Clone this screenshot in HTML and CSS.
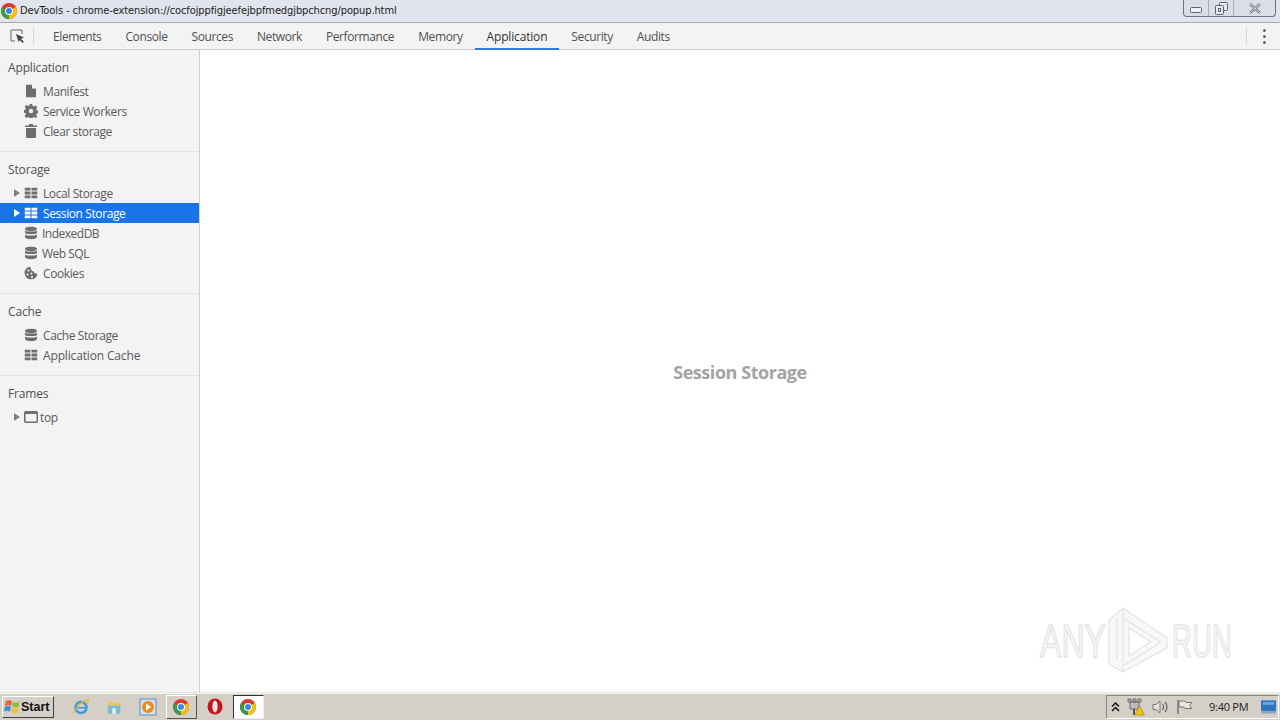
FILE: index.html
```html
<!DOCTYPE html>
<html lang="en">
<head>
<title>DevTools</title>
<link rel="stylesheet" href="styles.css">
</head>
<body>

<svg class="defs" width="0" height="0">
  <symbol id="chrome" viewBox="0 0 16 16">
    <circle cx="8" cy="8" r="8" fill="#d8392b"/>
    <path d="M8 8 L1.100 4 A8 8 0 0 0 8 16 Z" fill="#3a9a47"/>
    <path d="M8 8 L8 16 A8 8 0 0 0 14.900 4 Z" fill="#f4c20d"/>
    <circle cx="8" cy="8" r="4" fill="#fff"/>
    <circle cx="8" cy="8" r="3" fill="#4285e0"/>
  </symbol>
  <symbol id="grid" viewBox="0 0 13 11">
    <path d="M0 0h6v3H0zM7 0h6v3H7zM0 4h6v3H0zM7 4h6v3H7zM0 8h6v3H0zM7 8h6v3H7z"/>
  </symbol>
  <symbol id="db" viewBox="0 0 13 13">
    <ellipse cx="6.500" cy="2.400" rx="6" ry="2.400"/>
    <path d="M.5 3.900C1.500 5.500 11.500 5.500 12.500 3.900V6.400C11.500 8 1.500 8 .5 6.400zM.5 7.900C1.500 9.500 11.500 9.500 12.500 7.900V10.500C11.500 13.500 1.500 13.500 .5 10.500z"/>
  </symbol>
</svg>

<div class="titlebar">
  <svg class="title-icon" width="16" height="16"><use href="#chrome"/></svg>
  <span class="title-text">DevTools - chrome-extension://cocfojppfigjeefejbpfmedgjbpchcng/popup.html</span>
  <div class="win-btns">
    <div class="win-btn min"><svg width="12" height="6" viewBox="0 0 12 6"><rect x=".5" y=".5" width="11" height="5" rx="1" fill="#eef0f4" stroke="#5c6470"/></svg></div>
    <div class="win-btn max"><svg width="13" height="13" viewBox="0 0 13 13" fill="#e6e9ef" stroke="#5c6470"><rect x="4.500" y=".5" width="8" height="8" rx="1"/><rect x=".5" y="3.500" width="8" height="9" rx="1"/><rect x="3.500" y="6.500" width="2" height="3"/></svg></div>
    <div class="win-btn close"><svg width="12" height="11" viewBox="0 0 12 11"><path d="M1 1 L11 10 M11 1 L1 10" stroke="#6b7380" stroke-width="2.500" fill="none"/><path d="M1 1 L11 10 M11 1 L1 10" stroke="#eef0f4" stroke-width="1" fill="none"/></svg></div>
  </div>
</div>

<div class="toolbar">
  <div class="inspect">
    <svg width="15" height="15" viewBox="0 0 15 15"><path d="M5 12H1V1h11v4" fill="none" stroke="#666" stroke-width="1"/><path d="M6 5l8 3.500-3 1.200 2.800 3-1.400 1.300-2.700-3L8.500 13z" fill="#444"/></svg>
  </div>
  <div class="tabs">
    <div class="tab">Elements</div>
    <div class="tab">Console</div>
    <div class="tab">Sources</div>
    <div class="tab">Network</div>
    <div class="tab">Performance</div>
    <div class="tab">Memory</div>
    <div class="tab active">Application</div>
    <div class="tab">Security</div>
    <div class="tab">Audits</div>
  </div>
  <div class="more"><span></span><span></span><span></span></div>
</div>

<div class="main">
  <div class="sidebar">
    <div class="section">
      <div class="section-title">Application</div>
      <div class="item">
        <svg class="icon" width="12" height="13" viewBox="0 0 12 13"><path d="M1 0H7l4 4V13H1zM7 0v4h4" fill="#6e6e6e"/></svg>
        <span>Manifest</span>
      </div>
      <div class="item">
        <svg class="icon" width="14" height="14" viewBox="0 0 14 14"><path d="M5.800 0h2.400l.4 2 1.300.6 1.800-1.100 1.600 1.700-1.100 1.700.5 1.300 2 .4v2.400l-2 .4-.5 1.300 1.100 1.700-1.600 1.700-1.800-1.100-1.300.5-.4 2H5.800l-.4-2-1.300-.5-1.800 1.100L.7 11.900l1.100-1.700-.5-1.300-2-.4V6.100l2-.4.500-1.300L.7 2.700l1.600-1.700 1.800 1.100 1.300-.6zM7 4.800a2.200 2.200 0 1 0 0 4.400 2.200 2.200 0 0 0 0-4.400z" fill="#6e6e6e" fill-rule="evenodd"/></svg>
        <span>Service Workers</span>
      </div>
      <div class="item">
        <svg class="icon" width="12" height="14" viewBox="0 0 12 14"><path d="M0 1.500h4V0h4v1.500h4V3H0zM1 4h10v9a1 1 0 0 1-1 1H2a1 1 0 0 1-1-1z" fill="#6e6e6e"/></svg>
        <span>Clear storage</span>
      </div>
    </div>

    <div class="section">
      <div class="section-title">Storage</div>
      <div class="item">
        <i class="arrow"></i>
        <svg class="icon grid" width="13" height="11"><use href="#grid"/></svg>
        <span>Local Storage</span>
      </div>
      <div class="item selected">
        <i class="arrow"></i>
        <svg class="icon grid" width="13" height="11"><use href="#grid"/></svg>
        <span>Session Storage</span>
      </div>
      <div class="item">
        <svg class="icon db" width="13" height="13"><use href="#db"/></svg>
        <span class="tight">IndexedDB</span>
      </div>
      <div class="item">
        <svg class="icon db" width="13" height="13"><use href="#db"/></svg>
        <span class="tight">Web SQL</span>
      </div>
      <div class="item">
        <svg class="icon" width="14" height="13" viewBox="0 0 14 13"><path d="M6.500 0a6.500 6.500 0 1 0 7 7.200C11.500 7.500 10 6.500 10 5 8 5 6.300 3 6.500 0z" fill="#6e6e6e"/><g fill="#f3f3f3"><circle cx="4.500" cy="4" r="1.100"/><circle cx="3.500" cy="8" r="1.100"/><circle cx="7.500" cy="7" r=".9"/><circle cx="8" cy="10.500" r="1.100"/></g></svg>
        <span>Cookies</span>
      </div>
    </div>

    <div class="section">
      <div class="section-title">Cache</div>
      <div class="item">
        <svg class="icon db" width="13" height="13"><use href="#db"/></svg>
        <span>Cache Storage</span>
      </div>
      <div class="item">
        <svg class="icon grid" width="13" height="11"><use href="#grid"/></svg>
        <span class="wide">Application Cache</span>
      </div>
    </div>

    <div class="section last">
      <div class="section-title">Frames</div>
      <div class="item">
        <i class="arrow"></i>
        <svg class="icon frame" width="14" height="12" viewBox="0 0 14 12"><rect x=".75" y=".75" width="12.500" height="10.500" rx="1" fill="#f3f3f3" stroke="#6e6e6e" stroke-width="1.500"/><rect x="1" y="1" width="12" height="2" fill="#6e6e6e"/></svg>
        <span class="frame-label">top</span>
      </div>
    </div>
  </div>

  <div class="content">
    <div class="placeholder">Session Storage</div>
  </div>
</div>

<div class="taskbar">
  <div class="start">
    <svg width="17" height="16" viewBox="0 0 18 16"><path d="M2 2C5 0 7 1 8.500 2L7.500 7C6 6 4 5.500 1 7z" fill="#e8642c"/><path d="M9.500 2.500C12 4 14 4 16.500 2.500L15.500 7.500C13 9 11 8.500 8.700 7.500z" fill="#8dbb3c"/><path d="M1 8C3.500 6.500 5.500 7 7.300 8L6.400 13C4.500 12 2.500 11.500 0 13z" fill="#3f8fd8"/><path d="M8.400 8.500C11 9.500 13 10 15.300 8.500L14.500 13.500C12 15 10 14.500 7.500 13.500z" fill="#f2c230"/></svg>
    <span>Start</span>
  </div>
  <div class="quick">
    <div class="task"><svg width="18" height="18" viewBox="0 0 18 18"><circle cx="9" cy="9.500" r="5.500" fill="none" stroke="#3c9ad8" stroke-width="2.500"/><path d="M5 9h9v1.500H5z" fill="#3c9ad8"/><path d="M1.500 15C3 11 9 3 16 2c1 1-.5 3-1.500 4" fill="none" stroke="#e0b83c" stroke-width="1.300"/></svg></div>
    <div class="task"><svg width="16" height="16" viewBox="0 0 18 17"><path d="M2 2h5l1 2h8v11a1 1 0 0 1-1 1H3a1 1 0 0 1-1-1z" fill="#e6c765"/><path d="M2 7h14v9H2z" fill="#7fb9d6"/><path d="M7 10h4v6H7z" fill="#e6f1f5"/></svg></div>
    <div class="task"><svg width="18" height="18" viewBox="0 0 18 18"><rect x="1" y="1" width="16" height="16" fill="#cfe0ef" stroke="#5d8fc0"/><circle cx="9" cy="9" r="6" fill="#ee8a1e"/><path d="M7 5.500l5 3.500-5 3.500z" fill="#fff"/></svg></div>
    <div class="task raised"><svg width="16" height="16"><use href="#chrome"/></svg></div>
    <div class="task"><svg width="16" height="17" viewBox="0 0 16 17"><ellipse cx="8" cy="8.500" rx="7.500" ry="8" fill="#c5161d"/><ellipse cx="8" cy="8.500" rx="2.600" ry="6" fill="#f4e9e4"/></svg></div>
    <div class="task pressed"><svg width="16" height="16"><use href="#chrome"/></svg></div>
  </div>
  <div class="tray">
    <svg width="9" height="10" viewBox="0 0 9 10"><path d="M1 4.500L4.500 1 8 4.500M1 9l3.500-3.500L8 9" fill="none" stroke="#111" stroke-width="1.500"/></svg>
    <svg width="18" height="18" viewBox="0 0 18 18"><path d="M1 1h3v3H1zM6 1h3v3H6zM11 1h3v3h-3zM3 4h9v7H3z" fill="#bbb" stroke="#555" stroke-width=".8"/><path d="M7 11v6" stroke="#555" stroke-width="2"/><path d="M12.500 8l5 9h-10z" fill="#f2c318" stroke="#9a7a10" stroke-width=".6"/></svg>
    <svg width="17" height="16" viewBox="0 0 17 16"><path d="M1 5.500h3L8 2v12L4 10.500H1z" fill="#e4e2dc" stroke="#777"/><path d="M10.500 5c1.500 2 1.500 4 0 6M13 3c2.500 3 2.500 7 0 10" fill="none" stroke="#666" stroke-width="1.200"/></svg>
    <svg width="17" height="16" viewBox="0 0 17 16"><path d="M2 1v14" stroke="#777" stroke-width="1.500"/><path d="M3 2h6l1 1.500h6l-2.500 3 2.500 3h-7L8 8H3z" fill="#e8e6e0" stroke="#777"/></svg>
    <span class="clock">9:40 PM</span>
    <svg class="desktop" width="15" height="14" viewBox="0 0 17 15"><rect width="17" height="12" fill="#2f74c0"/><rect y="12" width="17" height="3" fill="#90a8c0"/><rect x="2" y="2" width="13" height="3" fill="#6ba6dd"/></svg>
  </div>
</div>

<svg class="watermark" width="243" height="68" viewBox="0 0 243 68">
  <g fill="#f8f8f8" stroke="#e8e8e8" stroke-width="1.500">
    <path d="M72 14L86 2 130 32V42L86 66 72 58Z"/>
    <path d="M80 12V54M86 2V66M86 12L124 36 86 60" fill="none"/>
    <path d="M92 22V50L114 36Z" fill="#fff"/>
  </g>
  <text class="wm-text" x="3" y="51" textLength="66" lengthAdjust="spacingAndGlyphs">ANY</text>
  <text class="wm-text" x="135" y="51" textLength="60" lengthAdjust="spacingAndGlyphs">RUN</text>
</svg>

</body>
</html>
```

FILE: styles.css
```css
html, body {
  margin: 0;
  padding: 0;
  height: 720px;
  overflow: hidden;
}

body {
  display: flex;
  flex-direction: column;
  position: relative;
  background: #fff;
  font-family: "Open Sans", "Noto Sans", sans-serif;
  font-size: 12px;
  color: #4a4a4a;
}

.defs {
  position: absolute;
}

.titlebar {
  height: 22px;
  flex: none;
  display: flex;
  align-items: center;
  background: #dfe4ed;
  border-bottom: 1px solid #a9abae;
  color: #222;
}

.title-icon {
  margin-left: 1px;
  margin-right: 3px;
}

.title-text {
  flex: 1;
  padding-bottom: 2px;
  font-family: "DejaVu Sans Condensed", "DejaVu Sans", sans-serif;
  font-stretch: condensed;
  font-size: 11px;
  letter-spacing: -0.1px;
  white-space: nowrap;
}

.win-btns {
  display: flex;
  align-self: flex-start;
  height: 16px;
  margin-right: 4px;
  border: 1px solid #6d7480;
  border-top: none;
  border-radius: 0 0 4px 4px;
  background: #d9dee7;
}

.win-btn {
  display: flex;
  align-items: center;
  justify-content: center;
}

.win-btn.min {
  width: 25px;
  border-right: 1px solid #a8adb6;
  padding-top: 4px;
  box-sizing: border-box;
}

.win-btn.max {
  width: 25px;
  box-sizing: border-box;
  border-right: 1px solid #a8adb6;
}

.win-btn.close {
  width: 41px;
}

.toolbar {
  height: 26px;
  flex: none;
  display: flex;
  align-items: stretch;
  background: #f3f3f3;
  border-bottom: 1px solid #cccccc;
}

.inspect {
  width: 34px;
  flex: none;
  display: flex;
  align-items: center;
  justify-content: center;
  position: relative;
}

.inspect::after, .more::before {
  content: "";
  position: absolute;
  top: 4px;
  bottom: 4px;
  width: 1px;
  background: #d8d8d8;
}

.inspect::after {
  right: 0;
}

.tabs {
  flex: 1;
  display: flex;
  padding-left: 7px;
}

.tab {
  padding: 0 12px;
  line-height: 27px;
  white-space: nowrap;
  color: #505050;
  letter-spacing: -0.4px;
}

.tab.active {
  color: #333;
  border-bottom: 2px solid #2f7de1;
  height: 25px;
  letter-spacing: -0.17px;
}

.more {
  width: 34px;
  box-sizing: border-box;
  padding-left: 2px;
  flex: none;
  position: relative;
  display: flex;
  flex-direction: column;
  align-items: center;
  justify-content: center;
  gap: 3px;
}

.more::before {
  left: 0;
}

.more span {
  width: 3px;
  height: 3px;
  border-radius: 50%;
  background: #666;
}

.main {
  flex: 1;
  display: flex;
  min-height: 0;
}

.sidebar {
  width: 199px;
  flex: none;
  background: #f3f3f3;
  border-right: 1px solid #d0d0d0;
}

.section {
  padding-bottom: 10px;
  border-bottom: 1px solid #e2e2e2;
}

.section.last {
  border-bottom: none;
}

.section-title {
  height: 31px;
  box-sizing: border-box;
  padding: 9px 0 0 8px;
  line-height: 17px;
  color: #505050;
  letter-spacing: -0.15px;
}

.item {
  height: 20px;
  position: relative;
  display: flex;
  align-items: center;
  padding-left: 43px;
  white-space: nowrap;
  color: #5a5a5a;
  letter-spacing: -0.4px;
}

.item .tight {
  margin-left: -1px;
  letter-spacing: -0.5px;
}

.item .wide {
  letter-spacing: -0.15px;
}

.item .icon {
  position: absolute;
  left: 31px;
  top: 50%;
  transform: translate(-50%, -50%);
  fill: #6e6e6e;
}

.item .frame-label {
  margin-left: -3px;
}

.arrow {
  position: absolute;
  left: 14px;
  top: 6px;
  width: 0;
  height: 0;
  border-left: 6px solid #808080;
  border-top: 4px solid transparent;
  border-bottom: 4px solid transparent;
}

.item.selected {
  background: #1a73e8;
  color: #fff;
}

.item.selected .arrow {
  border-left-color: #fff;
}

.item.selected .icon {
  fill: #fff;
}

.content {
  flex: 1;
  display: flex;
  align-items: center;
  justify-content: center;
}

.placeholder {
  font-size: 18px;
  font-weight: 700;
  color: #a3a3a3;
  letter-spacing: -0.45px;
  transform: translateY(1px);
}

.taskbar {
  height: 28px;
  flex: none;
  display: flex;
  align-items: center;
  background: #d4d0c8;
  border-top: 1px solid #e8e6e0;
  box-sizing: border-box;
  box-shadow: inset 0 1px 0 #f4f3ef;
}

.start {
  width: 52px;
  height: 22px;
  margin-left: 2px;
  display: flex;
  align-items: center;
  box-sizing: border-box;
  padding-left: 1px;
  background: #d4d0c8;
  border: 1px solid;
  border-color: #fff #404040 #404040 #fff;
  font-family: "Liberation Sans", Arial, sans-serif;
  font-weight: 700;
  font-size: 12.5px;
  color: #111;
}

.quick {
  flex: 1;
  display: flex;
  align-items: center;
  margin-left: 11px;
  gap: 2.5px;
}

.task {
  width: 31px;
  height: 24px;
  box-sizing: border-box;
  display: flex;
  align-items: center;
  justify-content: center;
}

.task.raised {
  border: 1px solid;
  border-color: #fff #555 #555 #fff;
}

.task.pressed {
  background: #fff;
  border: 1px solid;
  border-color: #333 #eee #eee #333;
}

.tray {
  height: 24px;
  width: 173px;
  margin-right: 1px;
  box-sizing: border-box;
  display: flex;
  align-items: center;
  padding-left: 4px;
  gap: 7px;
  border: 1px solid;
  border-color: #8a8780 #fff #fff #8a8780;
}

.clock {
  margin-left: 9px;
  font-size: 11px;
  letter-spacing: -0.25px;
  color: #222;
  white-space: nowrap;
}

.desktop {
  margin-left: 6px;
}

.watermark {
  position: absolute;
  left: 1037px;
  top: 606px;
}

.wm-text {
  font-family: "Liberation Sans", Arial, sans-serif;
  font-size: 47px;
  fill: #f8f8f8;
  stroke: #e4e4e4;
  stroke-width: 1.5px;
}
```
